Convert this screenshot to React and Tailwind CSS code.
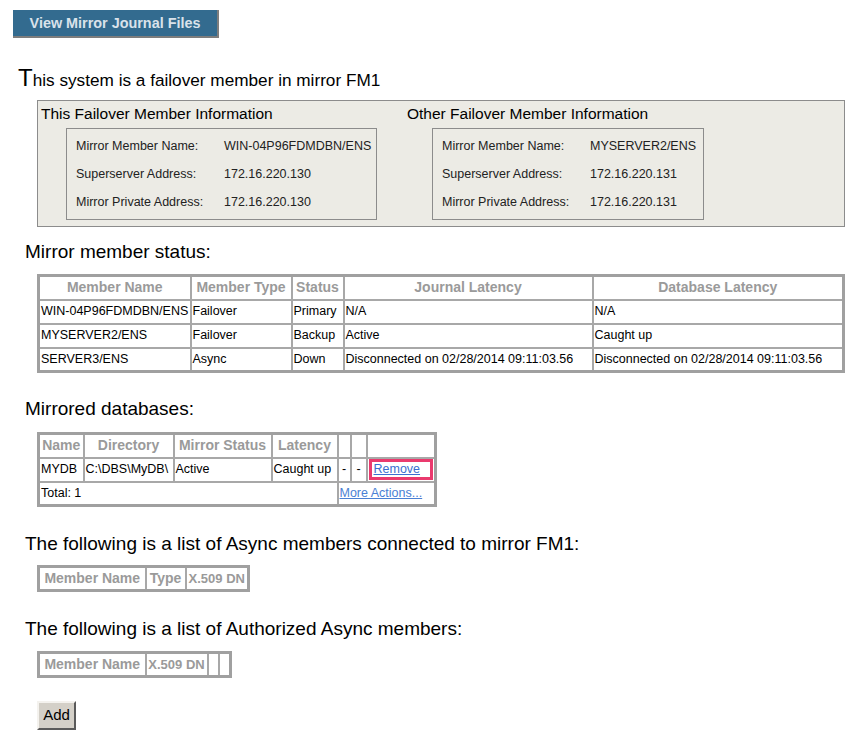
import React from 'react';

const font = { fontFamily: '"Liberation Sans", Arial, sans-serif' };

function InfoBlock({ title, rows, boxWidth }) {
  return (
    <div>
      <div className="text-[15.5px] leading-[20px] text-black">{title}</div>
      <div className={`ml-[25px] mt-[4px] border border-[#8c8c8c] px-[9px] py-[3px] ${boxWidth}`}>
        {rows.map(([k, v]) => (
          <div key={k} className="flex h-[28px] items-center whitespace-nowrap text-[12.5px] text-[#222]">
            <span className="w-[148px] shrink-0">{k}</span>
            <span>{v}</span>
          </div>
        ))}
      </div>
    </div>
  );
}

const th = 'border-2 border-[#a8a8a8] px-[1px] h-[24px] text-[14px] font-bold text-[#9a9a9a] text-center whitespace-nowrap overflow-hidden';
const thTall = 'border-2 border-[#a8a8a8] px-0 h-[23px] font-bold text-[#9a9a9a] text-center whitespace-nowrap overflow-hidden';
const td = 'border-2 border-[#a8a8a8] px-[1px] h-[24px] text-[12.5px] text-black whitespace-nowrap overflow-hidden';

const members = [
  ['WIN-04P96FDMDBN/ENS', 'Failover', 'Primary', 'N/A', 'N/A'],
  ['MYSERVER2/ENS', 'Failover', 'Backup', 'Active', 'Caught up'],
  ['SERVER3/ENS', 'Async', 'Down', 'Disconnected on 02/28/2014 09:11:03.56', 'Disconnected on 02/28/2014 09:11:03.56'],
];

export default function App() {
  return (
    <div className="min-h-[739px] w-[865px] bg-white pt-[10px]" style={font}>
      <button className="ml-[13px] block h-[28px] w-[206px] border-b-2 border-r-2 border-[#7d7d7d] bg-[#336b8f] pt-[2px] text-[14.4px] font-bold text-[#d9e2ea]">
        View Mirror Journal Files
      </button>

      <div className="ml-[18px] mt-[28px] leading-[24px] text-[17.2px] text-black">
        <span className="text-[24px]">T</span>his system is a failover member in mirror FM1
      </div>

      <div className="ml-[37px] mt-[8px] flex h-[127px] w-[808px] border border-[#8c8c8c] bg-[#ecebe5] pl-[3px] pt-[3px]">
        <div className="w-[366px]">
          <InfoBlock
            title="This Failover Member Information"
            boxWidth="w-[311px]"
            rows={[
              ['Mirror Member Name:', 'WIN-04P96FDMDBN/ENS'],
              ['Superserver Address:', '172.16.220.130'],
              ['Mirror Private Address:', '172.16.220.130'],
            ]}
          />
        </div>
        <InfoBlock
          title="Other Failover Member Information"
          boxWidth="w-[272px]"
          rows={[
            ['Mirror Member Name:', 'MYSERVER2/ENS'],
            ['Superserver Address:', '172.16.220.131'],
            ['Mirror Private Address:', '172.16.220.131'],
          ]}
        />
      </div>

      <div className="ml-[25px] mt-[14px] text-[19px] leading-[22px] text-black">Mirror member status:</div>
      <table className="ml-[37px] mt-[11px] table-fixed border-collapse border-[3px] border-[#a0a0a0]" style={{ width: 805 }}>
        <colgroup>
          <col style={{ width: 152 }} />
          <col style={{ width: 101 }} />
          <col style={{ width: 52 }} />
          <col style={{ width: 249 }} />
          <col style={{ width: 251 }} />
        </colgroup>
        <thead>
          <tr>
            <th className={th}>Member Name</th>
            <th className={th}>Member Type</th>
            <th className={th}>Status</th>
            <th className={th}>Journal Latency</th>
            <th className={th}>Database Latency</th>
          </tr>
        </thead>
        <tbody>
          {members.map((r) => (
            <tr key={r[0]}>
              {r.map((c, i) => (
                <td key={i} className={td}>{c}</td>
              ))}
            </tr>
          ))}
        </tbody>
      </table>

      <div className="ml-[25px] mt-[25px] text-[19px] leading-[22px] text-black">Mirrored databases:</div>
      <table className="ml-[37px] mt-[12px] table-fixed border-collapse border-[3px] border-[#a0a0a0]" style={{ width: 397 }}>
        <colgroup>
          <col style={{ width: 45 }} />
          <col style={{ width: 90 }} />
          <col style={{ width: 98 }} />
          <col style={{ width: 66 }} />
          <col style={{ width: 13 }} />
          <col style={{ width: 16 }} />
          <col style={{ width: 69 }} />
        </colgroup>
        <thead>
          <tr>
            <th className={th}>Name</th>
            <th className={th}>Directory</th>
            <th className={th}>Mirror Status</th>
            <th className={th}>Latency</th>
            <th className={th}></th>
            <th className={th}></th>
            <th className={th}></th>
          </tr>
        </thead>
        <tbody>
          <tr>
            <td className={td}>MYDB</td>
            <td className={`${td} text-clip`}>C:\DBS\MyDB\</td>
            <td className={td}>Active</td>
            <td className={td}>Caught up</td>
            <td className={`${td} text-center`}>-</td>
            <td className={`${td} text-center`}>-</td>
            <td className="border-2 border-[#a8a8a8] p-0">
              <div className="mx-[1px] flex h-[21px] items-center border-[3px] border-[#ea3a6e] pl-[2px] text-[12.5px]">
                <a href="#" className="text-[#3b6fd0] underline">Remove</a>
              </div>
            </td>
          </tr>
          <tr>
            <td className={td} colSpan={4}>Total: 1</td>
            <td className={td} colSpan={3}>
              <a href="#" className="text-[#4a80d4] underline">More Actions...</a>
            </td>
          </tr>
        </tbody>
      </table>

      <div className="ml-[25px] mt-[26px] text-[19px] leading-[22px] text-black">
        The following is a list of Async members connected to mirror FM1:
      </div>
      <table className="ml-[37px] mt-[10px] table-fixed border-collapse border-[3px] border-[#a0a0a0]" style={{ width: 210 }}>
        <colgroup>
          <col style={{ width: 107 }} />
          <col style={{ width: 40 }} />
          <col style={{ width: 63 }} />
        </colgroup>
        <thead>
          <tr>
            <th className={`${thTall} text-[14px]`}>Member Name</th>
            <th className={`${thTall} text-[14px]`}>Type</th>
            <th className={`${thTall} text-[13px]`}>X.509 DN</th>
          </tr>
        </thead>
      </table>

      <div className="ml-[25px] mt-[26px] text-[19px] leading-[22px] text-black">
        The following is a list of Authorized Async members:
      </div>
      <table className="ml-[37px] mt-[11px] table-fixed border-collapse border-[3px] border-[#a0a0a0]" style={{ width: 192 }}>
        <colgroup>
          <col style={{ width: 107 }} />
          <col style={{ width: 62 }} />
          <col style={{ width: 11 }} />
          <col style={{ width: 12 }} />
        </colgroup>
        <thead>
          <tr>
            <th className={`${thTall} text-[14px]`}>Member Name</th>
            <th className={`${thTall} text-[13px]`}>X.509 DN</th>
            <th className={thTall}></th>
            <th className={thTall}></th>
          </tr>
        </thead>
      </table>

      <button className="ml-[37px] mt-[23px] block h-[29px] w-[39px] border-2 border-b-[#5a5a5a] border-l-[#f4f2ee] border-r-[#5a5a5a] border-t-[#f4f2ee] bg-[#d4d0c8] text-[15px] text-black">
        Add
      </button>
    </div>
  );
}
